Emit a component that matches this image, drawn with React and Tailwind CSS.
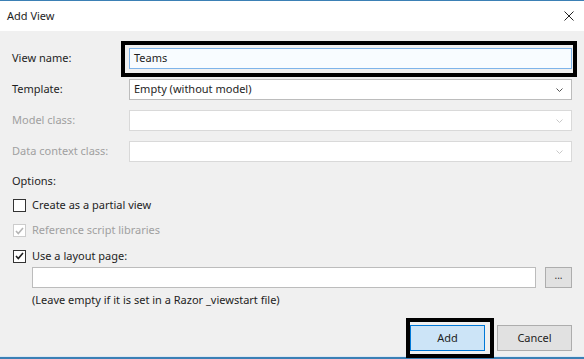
import React from "react";

const font = { fontFamily: '"Noto Sans", "Open Sans", sans-serif' };

function Chevron({ disabled }) {
  return (
    <svg width="7" height="4" viewBox="0 0 7 4" className="shrink-0">
      <path
        d="M0.5 0.5 L3.5 3.5 L6.5 0.5"
        fill="none"
        stroke={disabled ? "#c8c8c8" : "#555"}
        strokeWidth="1"
      />
    </svg>
  );
}

function Select({ value, disabled }) {
  return (
    <div
      className={`flex h-[21px] w-[443px] items-center justify-between border bg-white pl-[4px] pr-[8px] ${
        disabled ? "border-[#d9d9d9]" : "border-[#bcbcbc]"
      }`}
    >
      <span className="text-[11px] text-[#1e1e1e]">{value}</span>
      <Chevron disabled={disabled} />
    </div>
  );
}

function Check({ checked, disabled }) {
  return (
    <div
      className={`flex h-[13px] w-[13px] shrink-0 items-center justify-center border bg-white ${
        disabled ? "border-[#cccccc]" : "border-[#333333]"
      }`}
    >
      {checked && (
        <svg width="9" height="8" viewBox="0 0 9 8">
          <path
            d="M1 4 L3.3 6.5 L8 1"
            fill="none"
            stroke={disabled ? "#b5b5b5" : "#1e1e1e"}
            strokeWidth="1.6"
          />
        </svg>
      )}
    </div>
  );
}

function Row({ label, disabled, children }) {
  return (
    <div className="flex items-center">
      <span className={`w-[117px] text-[11px] ${disabled ? "text-[#a0a0a0]" : "text-[#1e1e1e]"}`}>
        {label}
      </span>
      {children}
    </div>
  );
}

function Option({ label, checked, disabled }) {
  return (
    <div className="flex h-[18px] items-center gap-[6px]">
      <Check checked={checked} disabled={disabled} />
      <span className={`text-[11px] ${disabled ? "text-[#a0a0a0]" : "text-[#1e1e1e]"}`}>{label}</span>
    </div>
  );
}

export default function App() {
  return (
    <div
      className="flex h-[359px] w-[584px] flex-col overflow-hidden border-t border-[#3b80b5] bg-[#f0f0f0]"
      style={font}
    >
      {/* title bar */}
      <div className="flex h-[30px] shrink-0 items-center justify-between bg-white pl-[7px] pr-[10px]">
        <span className="text-[11px] text-[#1e1e1e]">Add View</span>
        <svg width="10" height="10" viewBox="0 0 10 10">
          <path d="M0.5 0.5 L9.5 9.5 M9.5 0.5 L0.5 9.5" stroke="#222" strokeWidth="1" />
        </svg>
      </div>

      {/* form */}
      <div className="flex min-h-0 flex-1 flex-col pl-[12px] pt-[17px]">
        <div className="flex flex-col gap-[10px]">
          <Row label="View name:">
            <div className="relative">
              <div className="flex h-[21px] w-[443px] items-center border border-[#7eb4ea] bg-[#f8fcff] pl-[4px]">
                <span className="text-[11px] text-[#1e1e1e]">Teams</span>
              </div>
              <div className="absolute -bottom-[8px] -left-[8px] -right-[5px] -top-[7px] border-[4px] border-black" />
            </div>
          </Row>
          <Row label="Template:">
            <Select value="Empty (without model)" />
          </Row>
          <Row label="Model class:" disabled>
            <Select value="" disabled />
          </Row>
          <Row label="Data context class:" disabled>
            <Select value="" disabled />
          </Row>
        </div>

        <div className="mt-[10px] h-[18px] text-[11px] leading-[18px] text-[#1e1e1e]">Options:</div>

        <div className="mt-[6px] flex flex-col gap-[7.5px] pl-[1px]">
          <Option label="Create as a partial view" />
          <Option label="Reference script libraries" checked disabled />
          <Option label="Use a layout page:" checked />
        </div>

        <div className="mt-[2px] flex items-center pl-[20px]">
          <div className="h-[21px] w-[504px] border border-[#bcbcbc] bg-white" />
          <div className="ml-[9px] flex h-[21px] w-[27px] items-center justify-center border border-[#adadad] bg-[#e1e1e1] pb-[4px] text-[10px] text-[#333]">
            ...
          </div>
        </div>
        <div className="mt-[3px] h-[18px] pl-[20px] text-[11px] leading-[18px] text-[#1e1e1e]">
          (Leave empty if it is set in a Razor _viewstart file)
        </div>

        <div className="mt-[16px] flex justify-end gap-[12px] pr-[12px]">
          <div className="relative">
            <div className="flex h-[26px] w-[75px] items-center justify-center border border-[#0078d7] bg-[#cce4f7] text-[11px] text-[#1e1e1e]">
              Add
            </div>
            <div className="absolute -bottom-[7px] -left-[4px] -right-[9px] -top-[7px] border-[4px] border-black" />
          </div>
          <div className="flex h-[26px] w-[75px] items-center justify-center border border-[#adadad] bg-[#e1e1e1] text-[11px] text-[#1e1e1e]">
            Cancel
          </div>
        </div>
      </div>

      <div className="h-[1px] shrink-0 bg-[#dbe9f5]" />
      <div className="h-[2px] shrink-0 bg-[#3b80b5]" />
    </div>
  );
}
